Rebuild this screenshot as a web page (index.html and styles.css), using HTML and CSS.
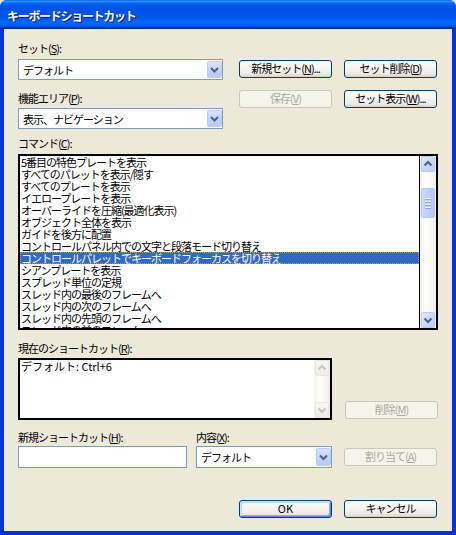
FILE: index.html
```html
<!DOCTYPE html>
<html lang="ja">
<head>
<meta charset="utf-8">
<title>キーボードショートカット</title>
<link rel="stylesheet" href="styles.css">
</head>
<body>
<div class="window">
  <div class="titlebar"><span class="title">キーボードショートカット</span></div>
  <div class="client">
    <div class="top">
      <div class="left">
        <div class="label">セット(<u>S</u>):</div>
        <div class="combo c1">
          <span class="val">デフォルト</span>
          <span class="dd"><svg width="15" height="17" viewBox="0 0 15 17"><path d="M4 7l3.5 3.5L11 7" fill="none" stroke="#4D6185" stroke-width="2"/></svg></span>
        </div>
        <div class="label l2">機能エリア(<u>P</u>):</div>
        <div class="combo c2">
          <span class="val">表示、ナビゲーション</span>
          <span class="dd"><svg width="15" height="17" viewBox="0 0 15 17"><path d="M4 7l3.5 3.5L11 7" fill="none" stroke="#4D6185" stroke-width="2"/></svg></span>
        </div>
      </div>
      <div class="btngrid">
        <button class="xbtn">新規セット(<u>N</u>)...</button>
        <button class="xbtn">セット削除(<u>D</u>)</button>
        <button class="xbtn dis">保存(<u>V</u>)</button>
        <button class="xbtn">セット表示(<u>W</u>)...</button>
      </div>
    </div>

    <div class="label cmdlabel">コマンド(<u>C</u>):</div>
    <div class="listbox">
      <div class="rows">
        <div class="row">5番目の特色プレートを表示</div>
        <div class="row">すべてのパレットを表示/隠す</div>
        <div class="row">すべてのプレートを表示</div>
        <div class="row">イエロープレートを表示</div>
        <div class="row">オーバーライドを圧縮(最適化表示)</div>
        <div class="row">オブジェクト全体を表示</div>
        <div class="row">ガイドを後方に配置</div>
        <div class="row">コントロールパネル内での文字と段落モード切り替え</div>
        <div class="row sel">コントロールパレットでキーボードフォーカスを切り替え</div>
        <div class="row">シアンプレートを表示</div>
        <div class="row">スプレッド単位の定規</div>
        <div class="row">スレッド内の最後のフレームへ</div>
        <div class="row">スレッド内の次のフレームへ</div>
        <div class="row">スレッド内の先頭のフレームへ</div>
        <div class="row">スレッド内の前のフレームへ</div>
      </div>
      <div class="vscroll">
        <div class="sbtn"><svg width="14" height="16" viewBox="0 0 14 16"><path d="M3.5 9.5L7 6l3.5 3.5" fill="none" stroke="#4D6185" stroke-width="2"/></svg></div>
        <div class="track">
          <div class="thumb"><span class="grip"></span><span class="grip"></span><span class="grip"></span><span class="grip"></span></div>
        </div>
        <div class="sbtn"><svg width="14" height="16" viewBox="0 0 14 16"><path d="M3.5 6.5L7 10l3.5-3.5" fill="none" stroke="#4D6185" stroke-width="2"/></svg></div>
      </div>
    </div>

    <div class="label curlabel">現在のショートカット(<u>R</u>):</div>
    <div class="currow">
      <div class="curbox">
        <div class="rows"><div class="row lat">デフォルト: Ctrl+6</div></div>
        <div class="vscroll off">
          <div class="sbtn"><svg width="14" height="16" viewBox="0 0 14 16"><path d="M3.5 9.5L7 6l3.5 3.5" fill="none" stroke="#C9C7BA" stroke-width="2"/></svg></div>
          <div class="track"></div>
          <div class="sbtn"><svg width="14" height="16" viewBox="0 0 14 16"><path d="M3.5 6.5L7 10l3.5-3.5" fill="none" stroke="#C9C7BA" stroke-width="2"/></svg></div>
        </div>
      </div>
      <button class="xbtn dis delbtn">削除(<u>M</u>)</button>
    </div>

    <div class="newlabels">
      <div class="label nl1">新規ショートカット(<u>H</u>):</div>
      <div class="label">内容(<u>X</u>):</div>
    </div>
    <div class="newrow">
      <div class="textinput"></div>
      <div class="combo c3">
        <span class="val">デフォルト</span>
        <span class="dd"><svg width="15" height="18" viewBox="0 0 15 18"><path d="M4 7.5l3.5 3.5L11 7.5" fill="none" stroke="#4D6185" stroke-width="2"/></svg></span>
      </div>
      <button class="xbtn dis assign">割り当て(<u>A</u>)</button>
    </div>

    <div class="okrow">
      <button class="xbtn default lat">OK</button>
      <button class="xbtn">キャンセル</button>
    </div>
  </div>
</div>
</body>
</html>
```

FILE: styles.css
```css
* { box-sizing: border-box; }
html, body { margin: 0; padding: 0; }
body {
  width: 456px;
  height: 535px;
  overflow: hidden;
  background: #ECE9D8;
  font-family: "Noto Sans CJK JP", "Noto Sans", sans-serif;
  font-size: 11px;
  line-height: 12px;
  letter-spacing: -1px;
  color: #000;
}
u { text-decoration: underline; text-underline-offset: 1px; }

.window {
  width: 456px;
  height: 535px;
  background: #0831D9;
  border-radius: 7px 7px 0 0;
  display: flex;
  flex-direction: column;
}
.titlebar {
  height: 29px;
  flex: none;
  border-radius: 7px 7px 0 0;
  background: linear-gradient(180deg, #0058EE 0%, #3593FF 4%, #288EFF 6%, #127DFF 8%, #036FFC 10%, #0262EE 14%, #0057E5 20%, #0054E3 24%, #0055EB 56%, #005BF5 66%, #026AFE 76%, #0062EF 86%, #0052D6 92%, #0040AB 94%, #003092 100%);
  padding: 10px 0 0 7px;
}
.title {
  color: #fff;
  font-weight: bold;
  font-size: 12px;
  line-height: 12px;
  letter-spacing: -1.3px;
  text-shadow: 1px 1px #0F1089;
  white-space: nowrap;
}
.client {
  flex: 1;
  margin: 0 4px 4px 4px;
  background: #ECE9D8;
  padding: 13px 0 0 14px;
}

.label { height: 12px; white-space: nowrap; }
.lat { letter-spacing: 0; }

.top { display: flex; }
.left { width: 205px; display: flex; flex-direction: column; }
.combo {
  height: 21px;
  border: 1px solid #7F9DB9;
  background: #fff;
  display: flex;
  align-items: center;
  justify-content: space-between;
  padding: 1px 0 1px 4px;
}
.c1 { margin-top: 5px; }
.l2 { margin-top: 12px; }
.c2 { margin-top: 4px; }
.val { white-space: nowrap; }
.dd {
  width: 15px;
  height: 17px;
  display: block;
  border: 1px solid #B9CCF9;
  border-radius: 2px;
  background: linear-gradient(180deg, #D9E6FD 0%, #C4D5FC 45%, #B6CBF8 100%);
}
.dd svg { display: block; margin: -1px; }

.btngrid {
  margin-left: 16px;
  margin-top: 18px;
  display: grid;
  grid-template-columns: 93px 93px;
  grid-auto-rows: 18px;
  column-gap: 12px;
  row-gap: 12px;
  align-content: start;
}
.xbtn {
  width: 93px;
  height: 18px;
  margin: 0;
  padding: 0 0 2px 0;
  border: 1px solid #003C74;
  border-radius: 3px;
  background: linear-gradient(180deg, #FFFFFF 0%, #F6F5F1 40%, #ECEBE6 80%, #D6D0C5 100%);
  font: inherit;
  line-height: 14px;
  letter-spacing: -1px;
  color: #000;
  text-align: center;
  white-space: nowrap;
}
.xbtn.dis {
  border-color: #C9C7BA;
  background: #F5F4EA;
  color: #ACA899;
}
.xbtn.default {
  box-shadow: inset 1px 1px #CEE7FF, inset -1px -1px #6982EE, inset 2px 2px #BCD4F6, inset -2px -2px #89ADE4;
  letter-spacing: 0;
}

.cmdlabel { margin-top: 8px; }
.listbox {
  margin-top: 5px;
  width: 420px;
  height: 176px;
  border: 2px solid #000;
  background: #fff;
  display: flex;
}
.rows { flex: 1; overflow: hidden; }
.row {
  height: 12px;
  padding-left: 1px;
  white-space: nowrap;
}
.row.sel {
  background: #316AC5;
  color: #fff;
  outline: 1px dotted #CE953A;
  outline-offset: -1px;
}
.vscroll {
  width: 17px;
  flex: none;
  border-left: 1px solid #000;
  background: linear-gradient(90deg, #F3F1EC 0%, #FEFEFB 35%, #F6F5F1 75%, #EEEDE5 100%);
  display: flex;
  flex-direction: column;
  padding: 0 1px;
}
.sbtn {
  width: 14px;
  height: 16px;
  flex: none;
  border: 1px solid #B5C9F8;
  border-radius: 2px;
  background: linear-gradient(135deg, #E3ECFE 0%, #C9D8FC 50%, #B9CDF8 100%);
  overflow: hidden;
}
.sbtn svg { display: block; margin: -1px; }
.track { flex: 1; padding-top: 16px; }
.thumb {
  width: 14px;
  height: 30px;
  border: 1px solid #B5C9F8;
  border-radius: 2px;
  background: linear-gradient(90deg, #C9D8FC 0%, #BACDF8 60%, #B2C7F6 100%);
  display: flex;
  flex-direction: column;
  align-items: center;
  justify-content: center;
  gap: 1px;
}
.grip {
  width: 6px;
  height: 1px;
  background: #EEF4FE;
  box-shadow: 0 1px #8CA9E8;
  margin-bottom: 1px;
}

.curlabel { margin-top: 12px; }
.currow { margin-top: 4px; display: flex; align-items: flex-end; }
.curbox {
  width: 314px;
  height: 62px;
  border: 2px solid #000;
  background: #fff;
  display: flex;
}
.vscroll.off {
  width: 16px;
  border-left: none;
}
.vscroll.off .sbtn {
  border-color: #E8E6DA;
  background: linear-gradient(180deg, #F7F6F1 0%, #EEEDE6 100%);
}
.delbtn { margin-left: 13px; margin-bottom: 1px; }

.newlabels { margin-top: 11px; display: flex; }
.nl1 { width: 178px; }
.newrow { margin-top: 3px; display: flex; align-items: flex-start; }
.textinput {
  width: 169px;
  height: 22px;
  border: 1px solid #7F9DB9;
  background: #fff;
}
.c3 { width: 136px; height: 22px; margin-left: 9px; }
.c3 .dd { height: 18px; }
.assign { margin-left: 12px; margin-top: 2px; }

.okrow { margin-top: 32px; margin-left: 221px; display: flex; gap: 12px; }
```
